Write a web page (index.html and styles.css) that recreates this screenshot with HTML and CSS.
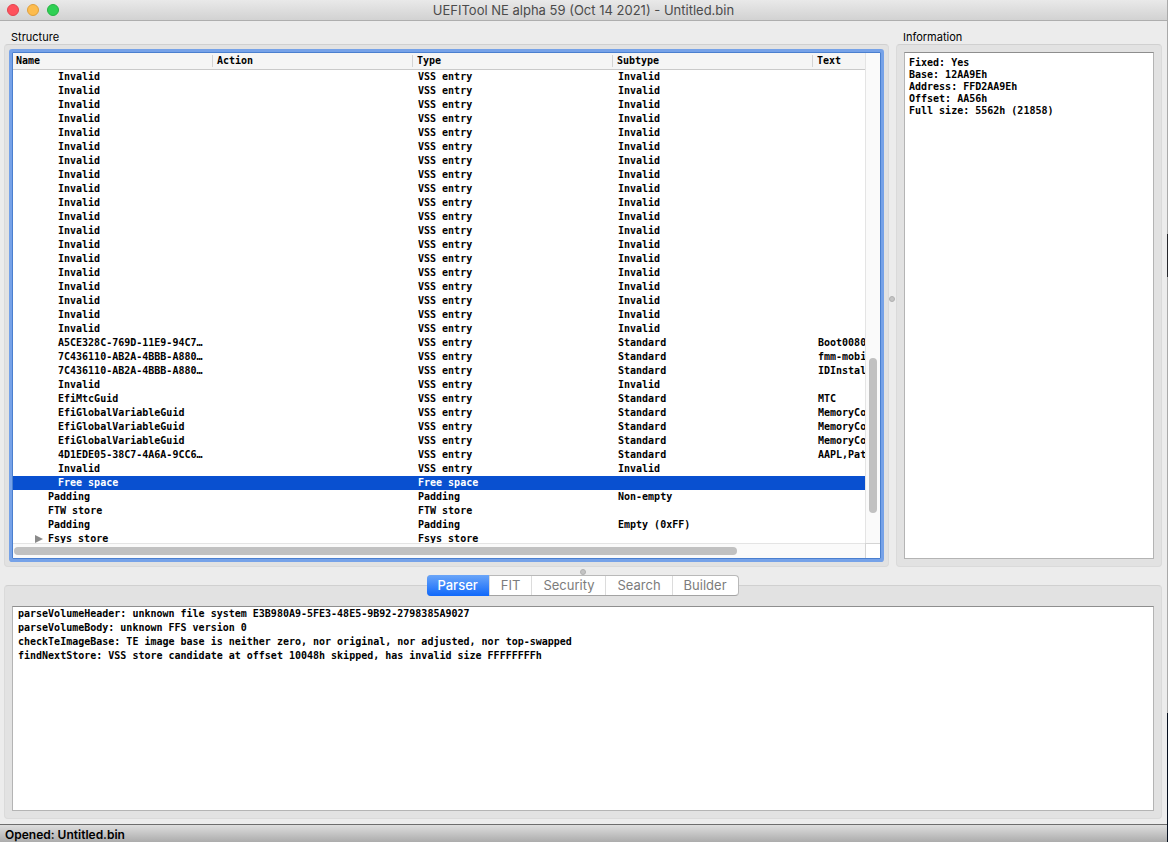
FILE: index.html
```html
<!DOCTYPE html>
<html lang="en">
<head>
  <meta charset="UTF-8" />
  <title>UEFITool NE alpha 59 (Oct 14 2021) - Untitled.bin</title>
  <link rel="stylesheet" href="styles.css">
</head>
<body>

  <div class="window">
    <header class="titlebar">
      <div class="lights">
        <button class="light close" aria-label="Close"></button>
        <button class="light minimize" aria-label="Minimize"></button>
        <button class="light zoom" aria-label="Zoom"></button>
      </div>
      <h1>UEFITool NE alpha 59 (Oct 14 2021) - Untitled.bin</h1>
    </header>

    <main class="panes">
      <section class="pane">
        <h2>Structure</h2>
        <div class="group">
          <div class="tree">
            <div class="tree-view">
              <table>
                <thead>
                  <tr><th>Name</th><th>Action</th><th>Type</th><th>Subtype</th><th>Text</th></tr>
                </thead>
                <tbody>
                  <tr><td>Invalid</td><td></td><td>VSS entry</td><td>Invalid</td><td></td></tr>
                  <tr><td>Invalid</td><td></td><td>VSS entry</td><td>Invalid</td><td></td></tr>
                  <tr><td>Invalid</td><td></td><td>VSS entry</td><td>Invalid</td><td></td></tr>
                  <tr><td>Invalid</td><td></td><td>VSS entry</td><td>Invalid</td><td></td></tr>
                  <tr><td>Invalid</td><td></td><td>VSS entry</td><td>Invalid</td><td></td></tr>
                  <tr><td>Invalid</td><td></td><td>VSS entry</td><td>Invalid</td><td></td></tr>
                  <tr><td>Invalid</td><td></td><td>VSS entry</td><td>Invalid</td><td></td></tr>
                  <tr><td>Invalid</td><td></td><td>VSS entry</td><td>Invalid</td><td></td></tr>
                  <tr><td>Invalid</td><td></td><td>VSS entry</td><td>Invalid</td><td></td></tr>
                  <tr><td>Invalid</td><td></td><td>VSS entry</td><td>Invalid</td><td></td></tr>
                  <tr><td>Invalid</td><td></td><td>VSS entry</td><td>Invalid</td><td></td></tr>
                  <tr><td>Invalid</td><td></td><td>VSS entry</td><td>Invalid</td><td></td></tr>
                  <tr><td>Invalid</td><td></td><td>VSS entry</td><td>Invalid</td><td></td></tr>
                  <tr><td>Invalid</td><td></td><td>VSS entry</td><td>Invalid</td><td></td></tr>
                  <tr><td>Invalid</td><td></td><td>VSS entry</td><td>Invalid</td><td></td></tr>
                  <tr><td>Invalid</td><td></td><td>VSS entry</td><td>Invalid</td><td></td></tr>
                  <tr><td>Invalid</td><td></td><td>VSS entry</td><td>Invalid</td><td></td></tr>
                  <tr><td>Invalid</td><td></td><td>VSS entry</td><td>Invalid</td><td></td></tr>
                  <tr><td>Invalid</td><td></td><td>VSS entry</td><td>Invalid</td><td></td></tr>
                  <tr><td>A5CE328C-769D-11E9-94C7…</td><td></td><td>VSS entry</td><td>Standard</td><td>Boot0080</td></tr>
                  <tr><td>7C436110-AB2A-4BBB-A880…</td><td></td><td>VSS entry</td><td>Standard</td><td>fmm-mobi</td></tr>
                  <tr><td>7C436110-AB2A-4BBB-A880…</td><td></td><td>VSS entry</td><td>Standard</td><td>IDInstal</td></tr>
                  <tr><td>Invalid</td><td></td><td>VSS entry</td><td>Invalid</td><td></td></tr>
                  <tr><td>EfiMtcGuid</td><td></td><td>VSS entry</td><td>Standard</td><td>MTC</td></tr>
                  <tr><td>EfiGlobalVariableGuid</td><td></td><td>VSS entry</td><td>Standard</td><td>MemoryCo</td></tr>
                  <tr><td>EfiGlobalVariableGuid</td><td></td><td>VSS entry</td><td>Standard</td><td>MemoryCo</td></tr>
                  <tr><td>EfiGlobalVariableGuid</td><td></td><td>VSS entry</td><td>Standard</td><td>MemoryCo</td></tr>
                  <tr><td>4D1EDE05-38C7-4A6A-9CC6…</td><td></td><td>VSS entry</td><td>Standard</td><td>AAPL,Pat</td></tr>
                  <tr><td>Invalid</td><td></td><td>VSS entry</td><td>Invalid</td><td></td></tr>
                  <tr class="selected"><td>Free space</td><td></td><td>Free space</td><td></td><td></td></tr>
                  <tr class="parent"><td>Padding</td><td></td><td>Padding</td><td>Non-empty</td><td></td></tr>
                  <tr class="parent"><td>FTW store</td><td></td><td>FTW store</td><td></td><td></td></tr>
                  <tr class="parent"><td>Padding</td><td></td><td>Padding</td><td>Empty (0xFF)</td><td></td></tr>
                  <tr class="parent closed"><td><svg class="arrow" viewBox="0 0 8 8"><path d="M0 0L8 4L0 8Z" /></svg>Fsys store</td><td></td><td>Fsys store</td><td></td><td></td></tr>
                </tbody>
              </table>
            </div>
            <div class="scroll vertical"><div class="thumb"></div></div>
            <div class="scroll horizontal"><div class="thumb"></div></div>
            <div class="corner"></div>
          </div>
        </div>
      </section>

      <div class="splitter"><span class="knob"></span></div>

      <section class="pane">
        <h2><label for="info">Information</label></h2>
        <div class="group">
          <textarea id="info" class="info" readonly>Fixed: Yes
Base: 12AA9Eh
Address: FFD2AA9Eh
Offset: AA56h
Full size: 5562h (21858)</textarea>
        </div>
      </section>
    </main>

    <div class="splitter row"><span class="knob"></span></div>

    <section class="output">
      <div class="tabs" role="tablist">
        <button role="tab" aria-selected="true" class="active">Parser</button>
        <button role="tab">FIT</button>
        <button role="tab">Security</button>
        <button role="tab">Search</button>
        <button role="tab">Builder</button>
      </div>
      <div class="group">
        <textarea class="log" aria-label="Parser" readonly>parseVolumeHeader: unknown file system E3B980A9-5FE3-48E5-9B92-2798385A9027
parseVolumeBody: unknown FFS version 0
checkTeImageBase: TE image base is neither zero, nor original, nor adjusted, nor top-swapped
findNextStore: VSS store candidate at offset 10048h skipped, has invalid size FFFFFFFFh</textarea>
      </div>
    </section>

    <footer class="status">Opened: Untitled.bin</footer>
  </div>

</body>
</html>
```
FILE: styles.css
```css
* {
  box-sizing: border-box;
}

body {
  margin: 0;
  padding-right: 1px;
  font-family: Inter, sans-serif;
  color: #000;
  background: linear-gradient(#a9a9a9 234px, #25262b 234px, #25262b 277px, #a9a9a9 277px, #a9a9a9 713px, #06101f 713px);
}

.window {
  height: 100vh;
  display: flex;
  flex-direction: column;
  background: #ececec;
}

/* title bar */
.titlebar {
  display: grid;
  grid-template-columns: 80px 1fr 80px;
  align-items: center;
  height: 21px;
  background: linear-gradient(#e9e9e9, #d2d2d2);
  border-bottom: 1px solid #aeaeae;
}

.titlebar h1 {
  margin: 0;
  font-size: 13px;
  font-weight: 400;
  line-height: 20px;
  text-align: center;
  color: #4b4b4b;
}

.lights {
  display: flex;
  gap: 8px;
  padding-left: 7px;
}

.light {
  width: 12px;
  height: 12px;
  padding: 0;
  border: 1px solid #e2444f;
  border-radius: 50%;
  background: #ff525d;
}

.light.minimize {
  background: #fdbc4e;
  border-color: #e0a03c;
}

.light.zoom {
  background: #2fd054;
  border-color: #25b343;
}

/* panes */
.panes {
  flex: 1;
  min-height: 0;
  display: grid;
  grid-template-columns: 885fr 7px 266fr;
  padding: 9px 5px 0 4px;
}

.pane {
  display: flex;
  flex-direction: column;
  min-width: 0;
  min-height: 0;
}

.pane h2 {
  margin: 0;
  padding-left: 7px;
  font-size: 11px;
  font-weight: 400;
  line-height: 14px;
}

.group {
  flex: 1;
  min-height: 0;
  display: flex;
  padding: 7px;
  background: #e2e2e2;
  border: 1px solid #dadada;
  border-top-color: #d0d0d0;
  border-radius: 4px;
}

.splitter {
  display: flex;
  align-items: center;
  justify-content: center;
  padding-right: 2px;
}

.splitter.row {
  height: 8px;
  align-items: flex-end;
}

.knob {
  flex: none;
  width: 6px;
  height: 6px;
  border: 1px solid #b0b0b0;
  border-radius: 50%;
  background: #c4c4c4;
}

/* tree */
.tree {
  flex: 1;
  min-width: 0;
  display: grid;
  grid-template-columns: 1fr 15px;
  grid-template-rows: 1fr 15px;
  background: #fff;
  border: 1px solid #4a7fcf;
  border-radius: 1px;
  box-shadow: 0 0 0 3px #76a2e8;
}

.tree-view {
  min-width: 0;
  min-height: 0;
  overflow: hidden;
}

table {
  width: 100%;
  table-layout: fixed;
  border-collapse: collapse;
}

table, textarea {
  font-family: "DejaVu Sans Mono", monospace;
  font-size: 10px;
  font-weight: 700;
}

th, td {
  width: 200px;
  padding: 0 0 0 5px;
  text-align: left;
  line-height: 14px;
  white-space: nowrap;
}

th {
  height: 17px;
  padding: 0 0 2px 4px;
  background: linear-gradient(#d4d4d4, #d4d4d4) right 2px / 1px 12px no-repeat #f5f5f5;
  box-shadow: inset 0 -1px #cacaca;
}

th:first-child {
  padding-left: 3px;
}

th:last-child, td:last-child {
  width: auto;
  background-image: none;
}

td:first-child {
  padding-left: 45px;
}

.parent td:first-child {
  padding-left: 35px;
}

.closed td:first-child {
  padding-left: 22px;
}

.arrow {
  width: 8px;
  height: 8px;
  margin-right: 5px;
  vertical-align: -1px;
  fill: #8a8a8a;
}

.selected {
  background: #0950d0;
  color: #fff;
}

.scroll {
  display: flex;
  background: #fafafa;
}

.vertical {
  flex-direction: column;
  align-items: center;
  justify-content: flex-end;
  border-left: 1px solid #e4e4e4;
  padding-bottom: 30px;
}

.horizontal {
  align-items: center;
  border-top: 1px solid #e4e4e4;
  padding-left: 1px;
}

.thumb {
  border-radius: 4px;
  background: #c1c1c1;
}

.vertical .thumb {
  width: 8px;
  height: 155px;
}

.horizontal .thumb {
  width: 85%;
  height: 8px;
}

.corner {
  border-top: 1px solid #d4d4d4;
  border-left: 1px solid #d4d4d4;
}

/* text boxes */
textarea {
  flex: 1;
  min-width: 0;
  margin: 0;
  padding: 4px;
  border: 1px solid #b4b4b4;
  border-top-color: #8e8e8e;
  outline: none;
  resize: none;
  background: #fff;
  color: #000;
}

.info {
  line-height: 12px;
}

.log {
  padding: 0 5px;
  line-height: 14px;
}

/* output */
.output {
  height: 244px;
  display: flex;
  flex-direction: column;
  padding: 0 5px 0 4px;
}

.output .group {
  padding-top: 20px;
}

.tabs {
  position: relative;
  z-index: 1;
  align-self: center;
  display: flex;
  height: 21px;
  margin-bottom: -11px;
  border: 1px solid #b9b9b9;
  border-bottom-color: #a3a3a3;
  border-radius: 4px;
  background: #fff;
}

.tabs button {
  padding: 0 11px;
  border: 0;
  border-left: 1px solid #dcdcdc;
  background: none;
  font-family: inherit;
  font-size: 13px;
  line-height: 19px;
  color: #7c7c7c;
}

.tabs .active {
  margin: -1px 0 -1px -1px;
  padding: 0 11px 0 10px;
  border: 0;
  border-radius: 4px 0 0 4px;
  background: linear-gradient(#6aa5f8, #0f68fb);
  font-weight: 500;
  color: #fff;
}

/* status bar */
.status {
  height: 18px;
  margin-top: 5px;
  padding-left: 5px;
  border-top: 1px solid #6d6d6d;
  background: linear-gradient(#dedede, #acacac);
  font-size: 12px;
  font-weight: 600;
  line-height: 19px;
}
```
